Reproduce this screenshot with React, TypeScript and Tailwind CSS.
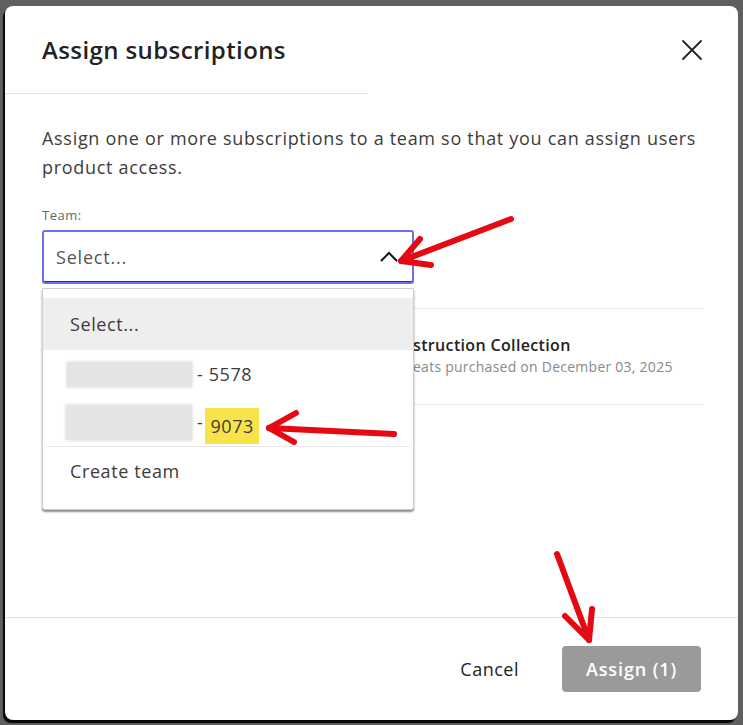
/**
 * Assign subscriptions modal with an open team dropdown and red annotation arrows.
 */

function BlurredName({ width, height }: { width: number; height: number }) {
  return (
    <span
      className="inline-block rounded-[2px] bg-[#e4e4e4] blur-[1px]"
      style={{ width, height }}
    />
  );
}

function Arrows() {
  return (
    <svg
      className="pointer-events-none absolute left-0 top-0 z-20"
      width="743"
      height="725"
      viewBox="0 0 743 725"
      fill="none"
      stroke="#e50914"
      strokeWidth="6"
      strokeLinecap="round"
      strokeLinejoin="round"
    >
      {/* arrow at the select chevron */}
      <path d="M511 219 L401 261" />
      <path d="M401 261 L420 239 M401 261 L431 265" />
      {/* arrow at 9073 */}
      <path d="M394 434 L269 428" />
      <path d="M269 428 L296 413 M269 428 L294 442" />
      {/* arrow at Assign button */}
      <path d="M557 554 L589 640" />
      <path d="M589 640 L565 616 M589 640 L592 609" />
    </svg>
  );
}

export default function App() {
  return (
    <div
      className="relative h-[725px] w-[743px] overflow-hidden bg-[#5f5f5f] pb-[5px] pl-[5px] pr-[5px] pt-[6px] tracking-[0.5px]"
      style={{ fontFamily: '"Open Sans", "Liberation Sans", sans-serif' }}
    >
      <div className="relative flex h-full flex-col rounded-[8px] bg-white shadow-[-2px_3px_1px_rgba(0,0,0,0.95)]">
        {/* Header */}
        <div className="mt-[30px] flex h-[28px] items-center justify-between pl-[37px] pr-[33px]">
          <h2 className="text-[24px] font-semibold leading-[28px] tracking-[0.4px] text-[#222]">
            Assign subscriptions
          </h2>
          <button className="flex h-[26px] w-[26px] items-center justify-center text-[#222]">
            <svg width="22" height="22" viewBox="0 0 22 22" stroke="currentColor" strokeWidth="1.8" strokeLinecap="round">
              <path d="M2 2 L20 20 M20 2 L2 20" />
            </svg>
          </button>
        </div>
        <div className="mt-[29px] h-px w-[363px] bg-[#e3e3e3]" />

        {/* Body */}
        <div className="pl-[37px] pr-[35px]">
          <p className="mt-[30px] text-[18px] leading-[29px] tracking-[0.7px] text-[#3c3c3c]">
            Assign one or more subscriptions to a team so that you can assign users product access.
          </p>
          <div className="mt-[25px] text-[13px] leading-[16px] text-[#666]">Team:</div>

          <div className="relative mt-[7px] w-[372px]">
            <div className="flex h-[54px] items-center justify-between rounded-[3px] border-2 border-[#6e6ef0] pl-[12px] pr-[14px] shadow-[inset_0_-1px_0_#333]">
              <span className="text-[18px] tracking-[0.8px] text-[#555]">Select...</span>
              <svg width="18" height="12" viewBox="0 0 18 12" fill="none" stroke="#111" strokeWidth="2">
                <path d="M1 10 L9 2 L17 10" />
              </svg>
            </div>

            {/* Dropdown */}
            <div className="absolute left-0 top-[58px] z-10 h-[222px] w-[372px] rounded-b-[3px] border border-[#cfcfcf] bg-white pt-[9px] text-[18px] tracking-[0.6px] text-[#3c3c3c] shadow-[0_2px_2px_rgba(0,0,0,0.45)]">
              <div className="flex h-[52px] items-center bg-[#eeeeee] pl-[27px]">Select...</div>
              <div className="flex h-[48px] items-center pl-[23px]">
                <BlurredName width={127} height={27} />
                <span className="ml-[4px]">- 5578</span>
              </div>
              <div className="flex h-[48px] items-center pl-[22px]">
                <BlurredName width={128} height={37} />
                <span className="ml-[4px]">-</span>
                <span className="ml-[2px] mt-[8px] flex h-[36px] items-center bg-[#f8e44a] px-[5px]">9073</span>
              </div>
              <div className="mx-[3px] h-px bg-[#e8e8e8]" />
              <div className="flex h-[48px] items-center pl-[27px]">Create team</div>
            </div>
          </div>

          {/* Subscription list behind the dropdown */}
          <div className="mt-[24px] border-y border-[#e6e6e6]">
            <div className="flex h-[95px] pt-[25px]">
              <div className="w-[371px] shrink-0" />
              <div className="flex flex-col">
                <span className="whitespace-nowrap text-[16px] font-semibold leading-[22px] tracking-[0.35px] text-[#222]">
                  struction Collection
                </span>
                <span className="whitespace-nowrap text-[14px] leading-[22px] tracking-[0.25px] text-[#8a8a8a]">
                  eats purchased on December 03, 2025
                </span>
              </div>
            </div>
          </div>
        </div>

        {/* Footer */}
        <div className="flex-1" />
        <div className="flex h-[103px] items-center justify-end border-t border-[#e3e3e3] pr-[37px]">
          <button className="mr-[43px] text-[18px] text-[#222]">Cancel</button>
          <button className="h-[46px] w-[139px] rounded-[4px] bg-[#9a9a9a] text-[18px] font-semibold tracking-[0.9px] text-white">
            Assign (1)
          </button>
        </div>
      </div>
      <Arrows />
    </div>
  );
}
